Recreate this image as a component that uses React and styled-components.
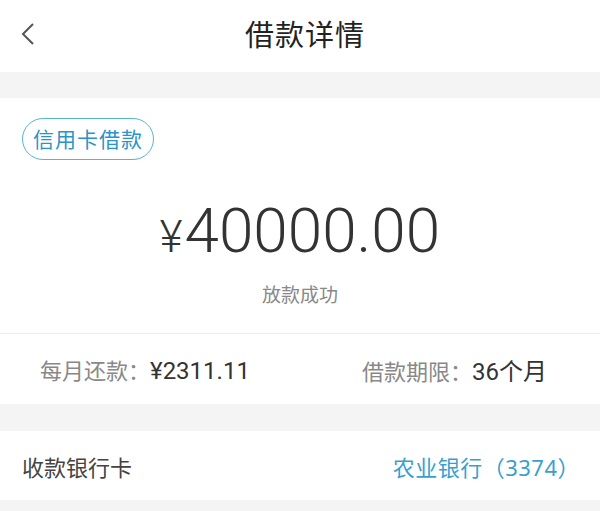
import styled, { createGlobalStyle } from "styled-components"

const GlobalStyle = createGlobalStyle`
    html, body {
        margin: 0;
        padding: 0;
        background: #f4f4f4;
    }
    body {
        font-family: "Noto Sans", "Noto Sans CJK SC", sans-serif;
    }
`

const Page = styled.div`
    width: 600px;
    height: 511px;
    background: #f4f4f4;
    overflow: hidden;
`

const Header = styled.div`
    height: 72px;
    background: #fff;
    display: flex;
    align-items: center;
    justify-content: center;
    position: relative;
`

const BackButton = styled.div`
    position: absolute;
    left: 18px;
    top: 21px;
    width: 20px;
    height: 26px;
`

const Title = styled.h1`
    margin: 0 0 6px 10px;
    font-size: 29px;
    font-weight: 400;
    color: #222;
    letter-spacing: 1px;
`

const Card = styled.div`
    background: #fff;
    margin-top: ${(p) => p.gap}px;
`

const Top = styled.div`
    padding: 20px 0 0 22px;
    height: 236px;
    box-sizing: border-box;
    border-bottom: 1px solid #ececec;
`

const Tag = styled.span`
    display: inline-block;
    padding: 0 10px;
    height: 42px;
    line-height: 40px;
    box-sizing: border-box;
    border: 1px solid #58b3d9;
    border-radius: 21px;
    color: #2a93c9;
    font-size: 21px;
    letter-spacing: 1px;
`

const AmountBox = styled.div`
    display: flex;
    flex-direction: column;
    align-items: center;
    margin-left: -22px;
    margin-top: 34px;
`

const Amount = styled.div`
    font-family: "Roboto", "Noto Sans", sans-serif;
    font-size: 62px;
    font-weight: 300;
    color: #333;
    line-height: 74px;
`

const Yen = styled.span`
    font-size: 44px;
    margin-right: 2px;
`

const Status = styled.div`
    margin-top: 6px;
    font-size: 19px;
    color: #888;
`

const InfoRow = styled.div`
    display: flex;
    height: 70px;
    align-items: center;
    padding-left: 40px;
`

const InfoItem = styled.div`
    width: ${(p) => p.w}px;
    font-size: 22px;
    color: #888;
`

const Value = styled.span`
    font-family: "Roboto", "Noto Sans", "Noto Sans CJK SC", sans-serif;
    color: #333;
    font-size: 24px;
`

const BankRow = styled.div`
    height: 69px;
    display: flex;
    align-items: center;
    justify-content: space-between;
    padding: 0 20px 0 22px;
    font-size: 22px;
`

const BankLabel = styled.span`
    color: #444;
`

const BankValue = styled.span`
    color: #3a9fd0;
    letter-spacing: 0.5px;
`

export default function App() {
    return (
        <>
            <GlobalStyle />
            <Page>
                <Header>
                    <BackButton>
                        <svg width="20" height="26" viewBox="0 0 20 26">
                            <path d="M15 3 L5 13 L15 23" fill="none" stroke="#555" strokeWidth="2" />
                        </svg>
                    </BackButton>
                    <Title>借款详情</Title>
                </Header>
                <Card gap={26}>
                    <Top>
                        <Tag>信用卡借款</Tag>
                        <AmountBox>
                            <Amount><Yen>¥</Yen>40000.00</Amount>
                            <Status>放款成功</Status>
                        </AmountBox>
                    </Top>
                    <InfoRow>
                        <InfoItem w={322}>每月还款：<Value>¥2311.11</Value></InfoItem>
                        <InfoItem w={220}>借款期限：<Value>36个月</Value></InfoItem>
                    </InfoRow>
                </Card>
                <Card gap={27}>
                    <BankRow>
                        <BankLabel>收款银行卡</BankLabel>
                        <BankValue>农业银行（3374）</BankValue>
                    </BankRow>
                </Card>
            </Page>
        </>
    )
}
